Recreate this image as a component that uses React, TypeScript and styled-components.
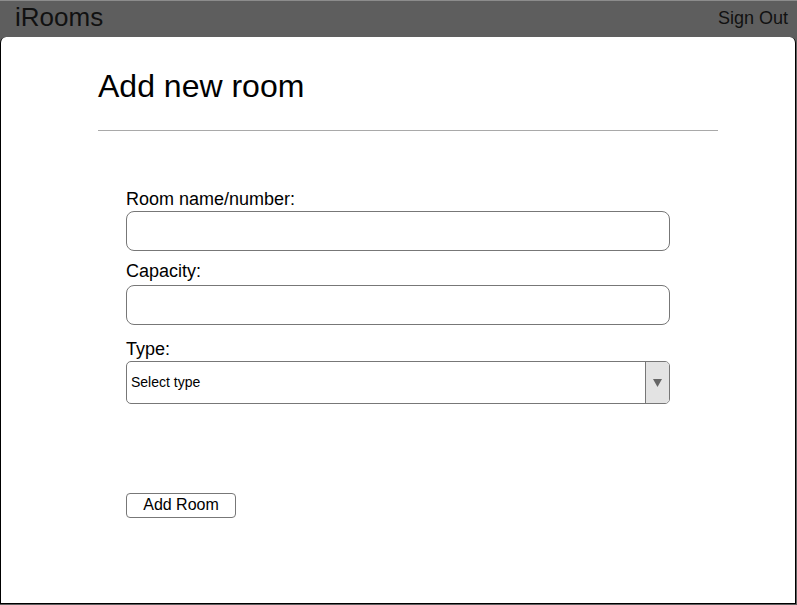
import React from "react";
import styled, { createGlobalStyle } from "styled-components";

const GlobalStyle = createGlobalStyle`
  html, body {
    margin: 0;
    padding: 0;
    height: 100%;
    background: #5e5e5e;
  }
  body {
    font-family: "Liberation Sans", Arial, sans-serif;
    color: #000;
  }
  #root {
    height: 100%;
  }
`;

const Page = styled.div`
  display: flex;
  flex-direction: column;
  height: 605px;
  background: #5e5e5e;
`;

const TopBar = styled.header`
  display: flex;
  align-items: flex-start;
  justify-content: space-between;
  height: 37px;
  box-sizing: border-box;
  border-top: 1px solid #8c8c8c;
  padding: 0 9px 0 15px;
  background: #5e5e5e;
  color: #111;
`;

const Brand = styled.div`
  font-size: 26px;
  line-height: 30px;
  margin-top: 1px;
`;

const SignOut = styled.a`
  font-size: 18px;
  line-height: 21px;
  margin-top: 7px;
  color: #111;
  cursor: pointer;
`;

const Panel = styled.main`
  flex: 1;
  margin: 0 1px 1px 0;
  background: #fff;
  border: 1px solid #000;
  border-top: none;
  border-radius: 6px 6px 0 0;
  padding: 31px 0 0 97px;
`;

const Content = styled.div`
  width: 620px;
`;

const Title = styled.h1`
  margin: 0;
  font-size: 32px;
  line-height: 36px;
  font-weight: normal;
`;

const Rule = styled.hr`
  margin: 26px 0 0;
  border: none;
  height: 1px;
  background: #a9a9a9;
`;

const Form = styled.form`
  display: flex;
  flex-direction: column;
  width: 544px;
  margin: 58px 0 0 28px;
`;

const Field = styled.div<{ $top: number }>`
  display: flex;
  flex-direction: column;
  margin-top: ${(p) => p.$top}px;
`;

const Label = styled.label<{ $gap: number }>`
  font-size: 18px;
  line-height: 21px;
  margin-bottom: ${(p) => p.$gap}px;
`;

const TextInput = styled.input`
  height: 40px;
  box-sizing: border-box;
  border: 1px solid #777;
  border-radius: 8px;
  padding: 0 8px;
  font-family: inherit;
  font-size: 16px;
  background: #fff;
  outline: none;
`;

const SelectShell = styled.div`
  display: flex;
  height: 43px;
  box-sizing: border-box;
  border: 1px solid #777;
  border-radius: 5px;
  overflow: hidden;
  background: #fff;
`;

const NativeSelect = styled.select`
  flex: 1;
  appearance: none;
  -webkit-appearance: none;
  border: none;
  background: transparent;
  padding: 0 4px 2px;
  font-family: "Liberation Sans", Arial, sans-serif;
  font-size: 14px;
  color: #000;
  outline: none;
`;

const ArrowBox = styled.div`
  width: 23px;
  display: flex;
  align-items: center;
  justify-content: center;
  background: #e3e3e3;
  border-left: 1px solid #777;
`;

const SubmitButton = styled.button`
  align-self: flex-start;
  margin-top: 89px;
  width: 110px;
  height: 25px;
  box-sizing: border-box;
  border: 1px solid #777;
  border-radius: 4px;
  background: #fff;
  font-family: "Liberation Sans", Arial, sans-serif;
  font-size: 16px;
  line-height: 18px;
  color: #000;
  padding: 0 0 2px;
`;

export default function App() {
  return (
    <>
      <GlobalStyle />
      <Page>
        <TopBar>
          <Brand>iRooms</Brand>
          <SignOut>Sign Out</SignOut>
        </TopBar>
        <Panel>
          <Content>
            <Title>Add new room</Title>
            <Rule />
            <Form onSubmit={(e) => e.preventDefault()}>
              <Field $top={0}>
                <Label $gap={1}>Room name/number:</Label>
                <TextInput type="text" />
              </Field>
              <Field $top={10}>
                <Label $gap={3}>Capacity:</Label>
                <TextInput type="text" />
              </Field>
              <Field $top={14}>
                <Label $gap={1}>Type:</Label>
                <SelectShell>
                  <NativeSelect defaultValue="">
                    <option value="">Select type</option>
                    <option value="lecture">Lecture hall</option>
                    <option value="lab">Lab</option>
                    <option value="meeting">Meeting room</option>
                  </NativeSelect>
                  <ArrowBox>
                    <svg width="9" height="8" viewBox="0 0 9 8">
                      <path d="M0 0 H9 L4.5 8 Z" fill="#666" />
                    </svg>
                  </ArrowBox>
                </SelectShell>
              </Field>
              <SubmitButton type="submit">Add Room</SubmitButton>
            </Form>
          </Content>
        </Panel>
      </Page>
    </>
  );
}
